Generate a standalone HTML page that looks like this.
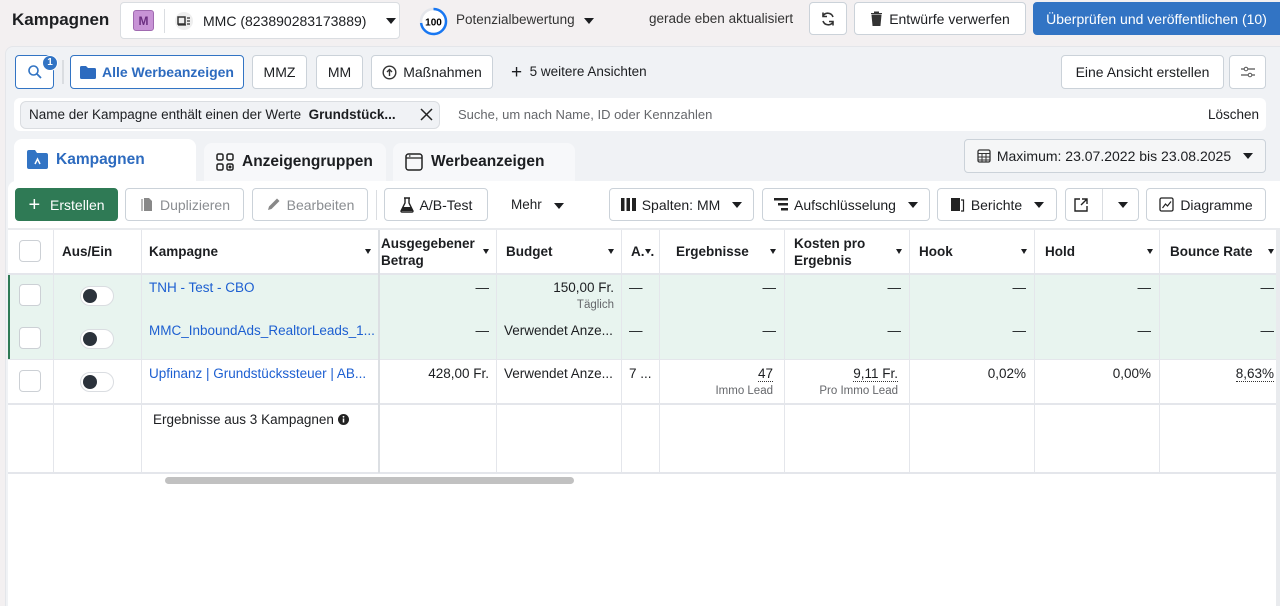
<!DOCTYPE html>
<html><head><meta charset="utf-8"><style>
*{box-sizing:border-box;margin:0;padding:0}
html,body{width:1280px;height:606px;overflow:hidden}
body{background:#f3f0f1;font-family:"Liberation Sans",sans-serif;font-size:13.5px;color:#1c1e21;position:relative}
.a{position:absolute}
.btn{position:absolute;border:1px solid #cbd2d9;border-radius:4px;background:#fff;display:flex;align-items:center;justify-content:center;gap:6px;font-size:14px;color:#1c1e21;white-space:nowrap}
.panel{position:absolute;left:5px;top:46px;width:1275px;height:560px;background:#f0f2f5;border-radius:8px 0 0 0;border:1px solid #e4e6ea;border-bottom:none;border-right:none}
.tri{display:inline-block;width:0;height:0;border-left:5px solid transparent;border-right:5px solid transparent;border-top:6px solid #1c1e21}
.tris{display:inline-block;width:0;height:0;border-left:3.5px solid transparent;border-right:3.5px solid transparent;border-top:5px solid #1c1e21}
.vl{position:absolute;top:230px;height:243px;width:1px;background:#e4e6eb}
.hl{position:absolute;left:8px;width:1272px;height:1px;background:#e4e6eb}
.th{position:absolute;top:230px;height:43px;font-weight:bold;font-size:13.5px;display:flex;align-items:center;line-height:17px}
.c{position:absolute;font-size:13.5px}
.r{text-align:right}
.sub{font-size:11.5px;color:#65676b}
.cb{position:absolute;left:19px;width:22px;height:22px;border:1px solid #ccd0d5;border-radius:4px;background:#fff}
.tg{position:absolute;left:80px;width:34px;height:20px;border:1px solid #dadde1;border-radius:10px;background:#fff}
.tg:after{content:"";position:absolute;left:2px;top:2px;width:14px;height:14px;border-radius:50%;background:#2b323b}
.lnk{color:#1d5fd1}
.dl{border-bottom:1px dotted #333}
</style></head><body>
<div class="a" style="left:12px;top:10px;font-weight:bold;font-size:17px">Kampagnen</div>
<div class="btn" style="left:120px;top:2px;width:280px;height:37px;justify-content:flex-start;padding-left:12px;border-color:#dadde1">
<span style="width:21px;height:21px;background:#c893d6;border:1px solid #a06ab0;border-radius:3px;color:#6b2e80;font-size:12px;font-weight:bold;display:flex;align-items:center;justify-content:center">M</span>
<span style="width:1px;height:24px;background:#dadde1;margin:0 4px"></span>
<span style="width:18px;height:18px;border-radius:50%;background:#eee;display:flex;align-items:center;justify-content:center"><svg width="14" height="12" viewBox="0 0 14 12"><rect x="1" y="2" width="7" height="7" fill="none" stroke="#333" stroke-width="1.5"/><path d="M1 10h8M10 3h3M10 6h3M10 9h3" stroke="#333" stroke-width="1.3"/></svg></span>
<span style="margin-left:4px">MMC (823890283173889)</span><span class="tri" style="margin-left:14px"></span></div>
<svg class="a" style="left:419px;top:7px" width="29" height="29" viewBox="0 0 29 29"><circle cx="14.5" cy="14.5" r="12.5" fill="#fff" stroke="#e4e6eb" stroke-width="2.5"/><path d="M14.5 2a12.5 12.5 0 1 1 -12.4 14" fill="none" stroke="#1877f2" stroke-width="2.5"/><text x="14.5" y="18.5" font-size="10" font-weight="bold" text-anchor="middle" font-family="Liberation Sans">100</text></svg>
<div class="a" style="left:456px;top:12px;color:#333">Potenzialbewertung <span class="tri" style="margin-left:6px"></span></div>
<div class="a" style="left:649px;top:11px;color:#333">gerade eben aktualisiert</div>
<div class="btn" style="left:809px;top:2px;width:38px;height:33px"><svg width="16" height="16" viewBox="0 0 16 16"><path d="M13 6A5.5 5.5 0 0 0 3 5M3 10a5.5 5.5 0 0 0 10 1" fill="none" stroke="#333" stroke-width="1.6"/><path d="M3 1.5v4h4M13 14.5v-4h-4" fill="none" stroke="#333" stroke-width="1.6"/></svg></div>
<div class="btn" style="left:854px;top:2px;width:172px;height:33px"><svg width="13" height="15" viewBox="0 0 13 15"><path d="M1 2.5h11M4.5 2.5V1h4v1.5M2 4h9l-1 10.5H3z" fill="#333" stroke="#333" stroke-width="1"/></svg>Entwürfe verwerfen</div>
<div class="btn" style="left:1033px;top:2px;width:247px;height:33px;background:#3274c4;border-color:#3274c4;color:#fff;border-radius:4px 0 0 4px">Überprüfen und veröffentlichen (10)</div>

<div class="panel"></div>
<div class="btn" style="left:15px;top:55px;width:39px;height:34px;border-color:#3274c4"><svg width="16" height="16" viewBox="0 0 16 16"><circle cx="6.5" cy="6.5" r="4.5" fill="none" stroke="#3274c4" stroke-width="1.6"/><path d="M10 10l4 4" stroke="#3274c4" stroke-width="1.8"/></svg></div>
<div class="a" style="left:42px;top:55px;width:16px;height:16px;border-radius:50%;background:#3274c4;border:1.5px solid #fff;color:#fff;font-size:10px;font-weight:bold;text-align:center;line-height:13px">1</div>
<div class="a" style="left:62px;top:60px;width:2px;height:24px;background:#dadde1"></div>
<div class="btn" style="left:70px;top:55px;width:174px;height:34px;border-color:#3274c4;color:#2d6bbf;font-weight:bold"><svg width="16" height="13" viewBox="0 0 16 13"><path d="M0 1.5Q0 0 1.5 0H6l2 2h6.5Q16 2 16 3.5v8Q16 13 14.5 13h-13Q0 13 0 11.5z" fill="#2d6bbf"/></svg>Alle Werbeanzeigen</div>
<div class="btn" style="left:252px;top:55px;width:55px;height:34px">MMZ</div>
<div class="btn" style="left:316px;top:55px;width:47px;height:34px">MM</div>
<div class="btn" style="left:371px;top:55px;width:122px;height:34px"><svg width="15" height="15" viewBox="0 0 15 15"><circle cx="7.5" cy="7.5" r="6.3" fill="none" stroke="#333" stroke-width="1.4"/><path d="M7.5 11V4.5M5 7l2.5-2.5L10 7" fill="none" stroke="#333" stroke-width="1.4"/></svg>Maßnahmen</div>
<div class="a" style="left:511px;top:64px"><span style="font-size:19px;line-height:14px;vertical-align:-2px">+</span>&nbsp; 5 weitere Ansichten</div>
<div class="btn" style="left:1061px;top:55px;width:163px;height:34px">Eine Ansicht erstellen</div>
<div class="btn" style="left:1229px;top:55px;width:37px;height:34px"><svg width="16" height="12" viewBox="0 0 16 12"><path d="M1 3h3M8 3h7M1 9h7M12 9h3" stroke="#555" stroke-width="1.2"/><circle cx="6" cy="3" r="1.8" fill="none" stroke="#555"/><circle cx="10" cy="9" r="1.8" fill="none" stroke="#555"/></svg></div>
<div class="a" style="left:14px;top:98px;width:1252px;height:33px;background:#fff;border-radius:6px"></div>
<div class="a" style="left:20px;top:101px;width:420px;height:28px;background:#f0f2f5;border:1px solid #dadde1;border-radius:6px"></div>
<div class="a" style="left:29px;top:107px">Name der Kampagne enthält einen der Werte &nbsp;<b>Grundstück...</b></div>
<svg class="a" style="left:420px;top:108px" width="13" height="13" viewBox="0 0 13 13"><path d="M1 1l11 11M12 1L1 12" stroke="#222" stroke-width="1.5"/></svg>
<div class="a" style="left:458px;top:107px;color:#65676b;font-size:13px">Suche, um nach Name, ID oder Kennzahlen</div>
<div class="a" style="left:1208px;top:107px">Löschen</div>
<div class="a" style="left:14px;top:139px;width:182px;height:50px;background:#fff;border-radius:8px 8px 0 0"></div>
<div class="a" style="left:204px;top:143px;width:182px;height:40px;background:#f7f8fa;border-radius:8px 8px 0 0"></div>
<div class="a" style="left:393px;top:143px;width:182px;height:40px;background:#f7f8fa;border-radius:8px 8px 0 0"></div>
<svg class="a" style="left:27px;top:150px" width="21" height="19" viewBox="0 0 21 19"><path d="M0 2Q0 0 2 0h6l2 3h9q2 0 2 2v12q0 2-2 2H2q-2 0-2-2z" fill="#3274c4"/><path d="M8 14l2.5-5 2.5 5" fill="none" stroke="#fff" stroke-width="1.5"/></svg>
<div class="a" style="left:56px;top:151px;font-weight:bold;font-size:15.5px;color:#2d6bbf">Kampagnen</div>
<svg class="a" style="left:216px;top:153px" width="18" height="18" viewBox="0 0 18 18"><g fill="none" stroke="#222" stroke-width="1.5"><rect x="1" y="1" width="6" height="6" rx="1.5"/><rect x="11" y="1" width="6" height="6" rx="1.5"/><rect x="1" y="11" width="6" height="6" rx="1.5"/><rect x="11" y="11" width="6" height="6" rx="1.5"/></g><circle cx="14" cy="14" r="1.5" fill="#222"/></svg>
<div class="a" style="left:242px;top:153px;font-weight:bold;font-size:15.5px">Anzeigengruppen</div>
<svg class="a" style="left:405px;top:153px" width="18" height="18" viewBox="0 0 18 18"><rect x="1" y="1" width="16" height="16" rx="2.5" fill="none" stroke="#222" stroke-width="1.5"/><path d="M1 5h16M4 3h1.5" stroke="#222" stroke-width="1.3"/></svg>
<div class="a" style="left:431px;top:153px;font-weight:bold;font-size:15.5px">Werbeanzeigen</div>
<div class="btn" style="left:964px;top:139px;width:302px;height:34px;background:#f5f6f7"><svg width="14" height="14" viewBox="0 0 14 14"><rect x="1" y="1" width="12" height="12" rx="1.5" fill="none" stroke="#333" stroke-width="1.3"/><path d="M1 4.5h12M1 8h12M1 11h12M5 4.5V13M9 4.5V13" stroke="#333" stroke-width="1"/></svg>Maximum: 23.07.2022 bis 23.08.2025 <span class="tri" style="margin-left:6px"></span></div>
<div class="a" style="left:8px;top:181px;width:1272px;height:425px;background:#fff;border-radius:8px 0 0 0"></div>
<div class="btn" style="left:15px;top:188px;width:103px;height:33px;background:#2f7a55;border-color:#2f7a55;color:#fff"><span style="font-size:20px;line-height:14px">+</span>&nbsp;Erstellen</div>
<div class="btn" style="left:125px;top:188px;width:119px;height:33px;color:#8a8d91"><svg width="15" height="15" viewBox="0 0 15 15"><path d="M3 2v12" stroke="#888" stroke-width="1.2" fill="none"/><path d="M5 1h5l3 3v10H5z" fill="#888"/></svg>Duplizieren</div>
<div class="btn" style="left:252px;top:188px;width:116px;height:33px;color:#8a8d91"><svg width="15" height="15" viewBox="0 0 15 15"><path d="M2 13l1-3.5 8-8 2.5 2.5-8 8z" fill="#888"/></svg>Bearbeiten</div>
<div class="a" style="left:376px;top:190px;width:1px;height:30px;background:#dadde1"></div>
<div class="btn" style="left:384px;top:188px;width:104px;height:33px"><svg width="14" height="16" viewBox="0 0 14 16"><path d="M5 1v5L1 14q0 1 1 1h10q1 0 1-1L9 6V1M4 1h6" fill="none" stroke="#222" stroke-width="1.4"/><path d="M3 10h8l2 4H1z" fill="#222"/></svg>A/B-Test</div>
<div class="a" style="left:511px;top:197px">Mehr <span class="tri" style="margin-left:8px"></span></div>
<div class="btn" style="left:609px;top:188px;width:145px;height:33px"><svg width="15" height="13" viewBox="0 0 15 13"><path d="M0 0h3.5v13H0zM5.5 0H9v13H5.5zM11 0h4v13h-4z" fill="#222"/></svg>Spalten: MM <span class="tri" style="margin-left:6px"></span></div>
<div class="btn" style="left:762px;top:188px;width:168px;height:33px"><svg width="14" height="13" viewBox="0 0 14 13"><path d="M0 0h14v2.5H0zM4 5h10v2.5H4zM7 10h7v2.5H7z" fill="#222"/></svg>Aufschlüsselung <span class="tri" style="margin-left:6px"></span></div>
<div class="btn" style="left:937px;top:188px;width:120px;height:33px"><svg width="15" height="15" viewBox="0 0 15 15"><rect x="1" y="1" width="9" height="13" fill="#222"/><path d="M11 3h2.5v11H11" fill="none" stroke="#222" stroke-width="1.2"/></svg>Berichte <span class="tri" style="margin-left:6px"></span></div>
<div class="btn" style="left:1065px;top:188px;width:74px;height:33px;justify-content:flex-start"><span style="width:36px;display:flex;justify-content:center"><svg width="14" height="14" viewBox="0 0 14 14"><path d="M6 1H1v12h12V8M8 1h5v5M13 1L7 7" fill="none" stroke="#222" stroke-width="1.4"/></svg></span><span style="width:1px;height:31px;background:#dadde1"></span><span style="width:36px;display:flex;justify-content:center"><span class="tri"></span></span></div>
<div class="btn" style="left:1146px;top:188px;width:120px;height:33px"><svg width="15" height="15" viewBox="0 0 15 15"><rect x="1" y="1" width="13" height="13" rx="1.5" fill="none" stroke="#222" stroke-width="1.3"/><path d="M3.5 11l3-4 2 2 3.5-4.5" fill="none" stroke="#222" stroke-width="1.2"/></svg>Diagramme</div>
<div class="a" style="left:8px;top:228px;width:1272px;height:2px;background:#e9ebee"></div>
<div class="a" style="left:8px;top:273px;width:1272px;height:86px;background:#e8f4ef"></div>
<div class="a" style="left:8px;top:273px;width:2px;height:86px;background:#2f7a55"></div>
<div class="hl" style="top:273px;height:2px"></div><div class="hl" style="top:359px"></div><div class="hl" style="top:403px;height:2px"></div><div class="hl" style="top:472px;height:2px"></div>
<div class="vl" style="left:53px"></div><div class="vl" style="left:141px"></div><div class="vl" style="left:378px;width:2px;background:#dcdfe3"></div><div class="vl" style="left:496px"></div><div class="vl" style="left:621px"></div><div class="vl" style="left:659px"></div><div class="vl" style="left:784px"></div><div class="vl" style="left:909px"></div><div class="vl" style="left:1034px"></div><div class="vl" style="left:1159px"></div>
<div class="cb" style="top:240px"></div>
<div class="th" style="left:62px">Aus/Ein</div>
<div class="th" style="left:149px;width:222px;justify-content:space-between">Kampagne<span class="tris"></span></div>
<div class="th" style="left:381px;width:108px;justify-content:space-between"><span>Ausgegebener<br>Betrag</span><span class="tris"></span></div>
<div class="th" style="left:506px;width:108px;justify-content:space-between">Budget<span class="tris"></span></div>
<div class="th" style="left:631px">A.<span class="tris"></span>.</div>
<div class="th" style="left:676px;width:100px;justify-content:space-between">Ergebnisse<span class="tris"></span></div>
<div class="th" style="left:794px;width:108px;justify-content:space-between"><span>Kosten pro<br>Ergebnis</span><span class="tris"></span></div>
<div class="th" style="left:919px;width:108px;justify-content:space-between">Hook<span class="tris"></span></div>
<div class="th" style="left:1045px;width:108px;justify-content:space-between">Hold<span class="tris"></span></div>
<div class="th" style="left:1170px;width:104px;justify-content:space-between">Bounce Rate<span class="tris"></span></div>
<div class="cb" style="top:284px"></div><div class="tg" style="top:286px"></div>
<div class="cb" style="top:327px"></div><div class="tg" style="top:329px"></div>
<div class="cb" style="top:370px"></div><div class="tg" style="top:372px"></div>
<div class="c lnk" style="left:149px;top:280px">TNH - Test - CBO</div>
<div class="c lnk" style="left:149px;top:323px">MMC_InboundAds_RealtorLeads_1...</div>
<div class="c lnk" style="left:149px;top:366px">Upfinanz | Grundstückssteuer | AB...</div>
<div class="c r" style="left:380px;width:109px;top:280px">—</div>
<div class="c r" style="left:380px;width:109px;top:323px">—</div>
<div class="c r" style="left:380px;width:109px;top:366px">428,00 Fr.</div>
<div class="c r" style="left:497px;width:117px;top:280px">150,00 Fr.<div class="sub" style="margin-top:4px">Täglich</div></div>
<div class="c" style="left:504px;top:323px">Verwendet Anze...</div>
<div class="c" style="left:504px;top:366px">Verwendet Anze...</div>
<div class="c" style="left:629px;top:280px">—</div><div class="c" style="left:629px;top:323px">—</div><div class="c" style="left:629px;top:366px">7 ...</div>
<div class="c r" style="left:660px;width:116px;top:280px">—</div><div class="c r" style="left:660px;width:116px;top:323px">—</div>
<div class="c r" style="left:660px;width:113px;top:366px"><span class="dl">47</span><div class="sub" style="margin-top:4px">Immo Lead</div></div>
<div class="c r" style="left:785px;width:116px;top:280px">—</div><div class="c r" style="left:785px;width:116px;top:323px">—</div>
<div class="c r" style="left:785px;width:113px;top:366px"><span class="dl">9,11 Fr.</span><div class="sub" style="margin-top:4px">Pro Immo Lead</div></div>
<div class="c r" style="left:910px;width:116px;top:280px">—</div><div class="c r" style="left:910px;width:116px;top:323px">—</div><div class="c r" style="left:910px;width:116px;top:366px">0,02%</div>
<div class="c r" style="left:1035px;width:116px;top:280px">—</div><div class="c r" style="left:1035px;width:116px;top:323px">—</div><div class="c r" style="left:1035px;width:116px;top:366px">0,00%</div>
<div class="c r" style="left:1160px;width:114px;top:280px">—</div><div class="c r" style="left:1160px;width:114px;top:323px">—</div><div class="c r" style="left:1160px;width:114px;top:366px"><span class="dl">8,63%</span></div>
<div class="c" style="left:153px;top:412px">Ergebnisse aus 3 Kampagnen <svg width="11" height="11" viewBox="0 0 11 11" style="vertical-align:-1px"><circle cx="5.5" cy="5.5" r="5.5" fill="#222"/><path d="M5.5 4.5v4" stroke="#fff" stroke-width="1.5"/><circle cx="5.5" cy="2.8" r="0.9" fill="#fff"/></svg></div>
<div class="a" style="left:165px;top:477px;width:409px;height:7px;border-radius:4px;background:#c1c1c1"></div>
<div class="a" style="left:1276px;top:230px;width:4px;height:376px;background:#e9ebee"></div>
</body></html>
